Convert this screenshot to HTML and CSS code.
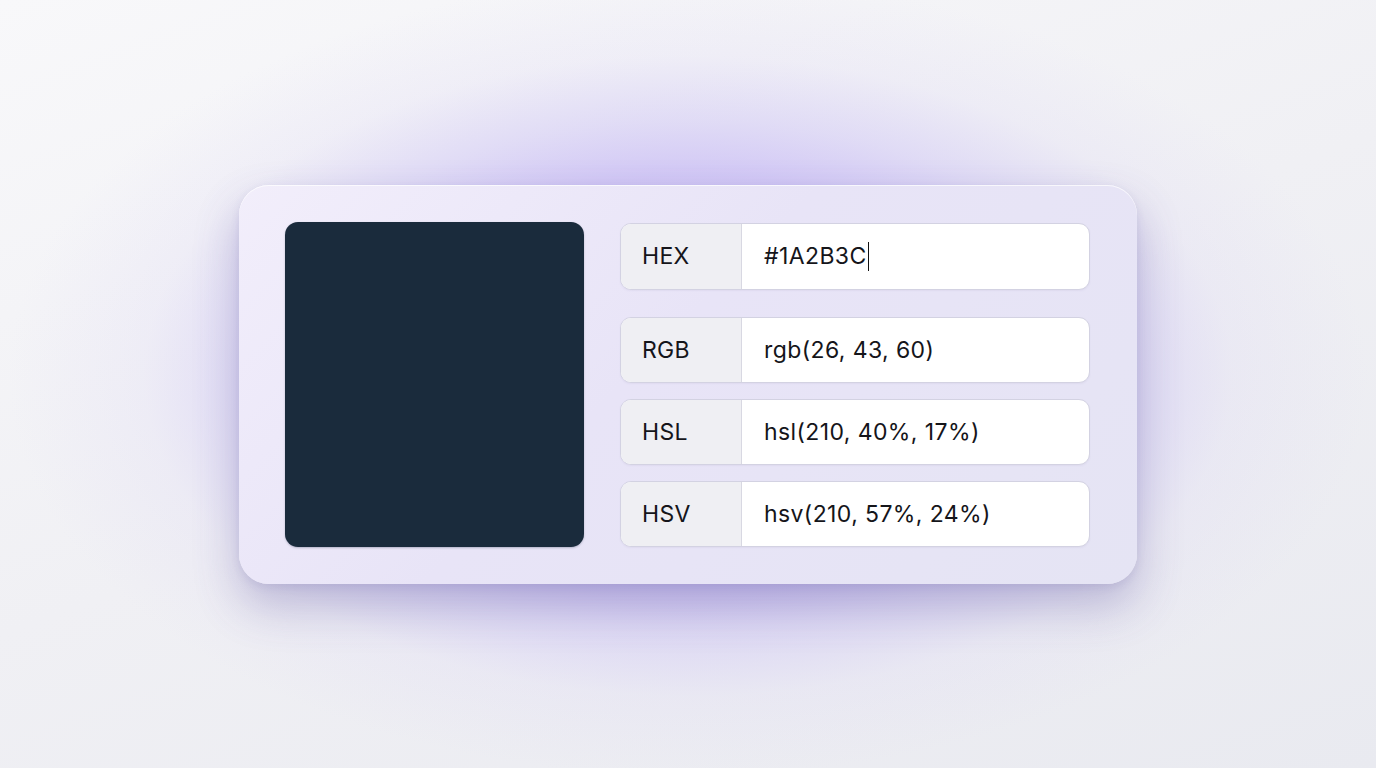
FILE: index.html
```html
<!DOCTYPE html>
<html lang="en">
<head>
<meta charset="utf-8">
<title>Color Converter</title>
<link rel="stylesheet" href="styles.css">
</head>
<body>
<div class="glow"></div>
<main class="card">
  <div class="swatch"></div>
  <div class="fields">
    <div class="row row-hex">
      <div class="label">HEX</div>
      <div class="value">#1A2B3C<span class="caret"></span></div>
    </div>
    <div class="row">
      <div class="label">RGB</div>
      <div class="value">rgb(26, 43, 60)</div>
    </div>
    <div class="row">
      <div class="label">HSL</div>
      <div class="value">hsl(210, 40%, 17%)</div>
    </div>
    <div class="row">
      <div class="label">HSV</div>
      <div class="value">hsv(210, 57%, 24%)</div>
    </div>
  </div>
</main>
</body>
</html>
```

FILE: styles.css
```css
html, body {
  margin: 0;
  height: 100%;
}
body {
  background: linear-gradient(160deg, #f8f8fa 0%, #f0f0f4 50%, #e9eaf0 100%);
  display: flex;
  align-items: center;
  justify-content: center;
  font-family: Inter, "Noto Sans", sans-serif;
  overflow: hidden;
  position: relative;
}
.glow {
  position: absolute;
  left: 50%;
  top: 50%;
  width: 1360px;
  height: 800px;
  transform: translate(-50%, -51%);
  background: radial-gradient(closest-side, rgba(190, 172, 245, 0.8) 0%, rgba(196, 182, 245, 0.7) 50%, rgba(204, 194, 245, 0.48) 64%, rgba(220, 214, 245, 0.22) 80%, rgba(240, 240, 246, 0) 100%);
  pointer-events: none;
}
.card {
  position: relative;
  width: 898px;
  height: 399px;
  box-sizing: border-box;
  padding: 37px 47px 37px 46px;
  border-radius: 30px;
  background: linear-gradient(135deg, #f2eefb 0%, #e8e4f7 45%, #e5e4f4 100%);
  box-shadow: 0 22px 45px rgba(80, 70, 150, 0.3), 0 3px 8px rgba(80, 70, 150, 0.1), inset 0 1px 0 rgba(255,255,255,0.7);
  display: flex;
  gap: 36px;
}
.swatch {
  width: 299px;
  height: 325px;
  border-radius: 13px;
  background: #1a2b3c;
  box-shadow: 0 1px 2px rgba(20, 30, 60, 0.25);
}
.fields {
  flex: 1;
  display: flex;
  flex-direction: column;
  gap: 16px;
  padding-top: 1px;
}
.row {
  height: 67px;
  box-sizing: border-box;
  display: flex;
  border: 1px solid #d3d2e2;
  border-radius: 11px;
  overflow: hidden;
  background: #fff;
  box-shadow: 0 1px 2px rgba(80, 70, 140, 0.06);
}
.row + .row { height: 66px; }
.row-hex { margin-bottom: 11px; }
.label {
  width: 121px;
  flex: none;
  background: #efeff3;
  border-right: 1px solid #d8d8e2;
  display: flex;
  align-items: center;
  padding-left: 21px;
  box-sizing: border-box;
  font-size: 23px;
  color: #15151a;
  letter-spacing: 0.3px;
}
.value {
  flex: 1;
  display: flex;
  align-items: center;
  padding-left: 22px;
  font-size: 23px;
  color: #15151a;
  letter-spacing: 0.4px;
}
.caret {
  display: inline-block;
  width: 1.5px;
  height: 29px;
  background: #111;
  margin-left: 1px;
}
```
